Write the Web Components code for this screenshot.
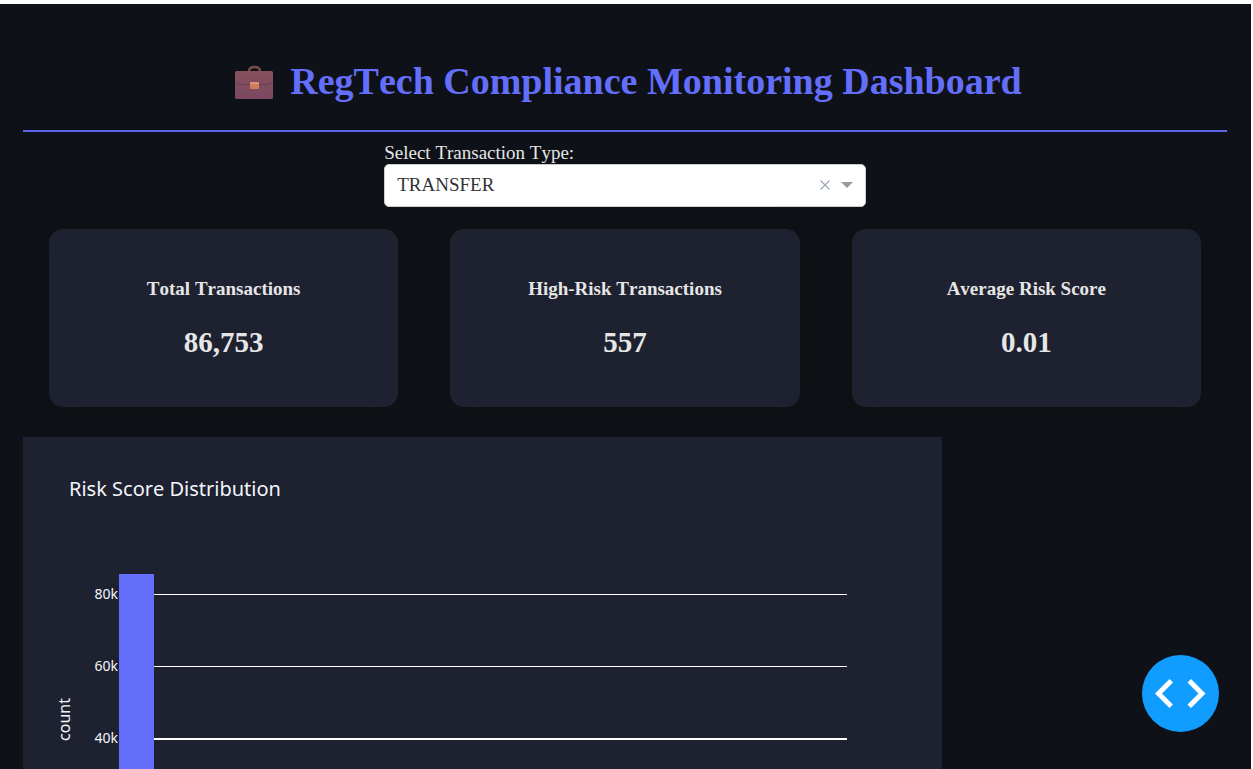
<!DOCTYPE html>
<html lang="en">
<head>
<meta charset="utf-8">
<meta name="viewport" content="width=device-width, initial-scale=1">
<title>RegTech Compliance Monitoring Dashboard</title>
<style>
  html { background: #fff; scrollbar-width: none; }
  body { margin: 0; padding: 4px 2px 0 0; font-family: "Liberation Serif", "Times New Roman", serif; font-size: 19px; font-kerning: none; color: #e6e6e6; }
</style>
</head>
<body>
<risk-dashboard></risk-dashboard>

<template id="risk-dashboard">
  <style>
    :host { display: block; background: #0e1117; padding: 53px 24px 24px 23px; }
    type-picker { width: 40%; margin: 10px auto 0; }
    .stats { display: grid; grid-template-columns: repeat(3, 1fr); gap: 52px; padding: 22px 26px 30px; }
    .charts { display: grid; grid-template-columns: 919fr 285fr; }
  </style>
  <dashboard-title>RegTech Compliance Monitoring Dashboard</dashboard-title>
  <main>
    <type-picker></type-picker>
    <div class="stats">
      <stat-card><span slot="label">Total Transactions</span><span slot="value">86,753</span></stat-card>
      <stat-card><span slot="label">High-Risk Transactions</span><span slot="value">557</span></stat-card>
      <stat-card><span slot="label">Average Risk Score</span><span slot="value">0.01</span></stat-card>
    </div>
    <div class="charts">
      <histogram-chart><span slot="title">Risk Score Distribution</span><span slot="axis">count</span></histogram-chart>
    </div>
  </main>
  <debug-button></debug-button>
</template>

<template id="dashboard-title">
  <style>
    :host { display: block; border-bottom: 2px solid #5f63e8; padding-bottom: 25px; }
    h1 { display: flex; justify-content: center; align-items: center; gap: 10px; margin: 0; font-size: 38px; line-height: 48px; font-weight: bold; color: #636efa; }
    svg { width: 52px; height: 36px; flex: none; }
  </style>
  <h1>
    <svg viewBox="0 0 52 36" aria-hidden="true">
      <defs><linearGradient id="leather" x1="0" y1="0" x2="0" y2="1"><stop offset="0" stop-color="#87525c"/><stop offset="1" stop-color="#7a4860"/></linearGradient></defs>
      <path d="M21 9.500V8.500Q21 4 26.500 4T32 8.500V9.500" fill="none" stroke="#7b4c49" stroke-width="2.500"/>
      <rect x="7" y="8" width="38" height="28" rx="1.500" fill="url(#leather)"/>
      <path d="M7.500 18Q9 21.500 12 21.500H40Q43 21.500 44.500 18" fill="none" stroke="#6d3b5b" stroke-width="1"/>
      <rect x="22" y="19" width="9" height="7" rx="1" fill="#d07c5e"/>
      <path d="M22 21V19.500H31V21Z" fill="#e29a74"/>
    </svg>
    <span><slot></slot></span>
  </h1>
</template>

<template id="type-picker">
  <style>
    :host { display: block; }
    label { display: block; line-height: 22px; }
    .box { display: flex; align-items: center; height: 43px; box-sizing: border-box; background: #fff; border: 1px solid #ccc; border-radius: 5px; padding: 0 12px 2px 0; }
    select { flex: 1; min-width: 0; height: 38px; appearance: none; border: 0; background: transparent; padding: 0 12px; font: inherit; font-kerning: none; color: #333; outline: 0; }
    button { border: 0; background: none; padding: 0; width: 12px; height: 20px; margin-right: 10px; display: grid; place-items: center; }
    svg { display: block; }
  </style>
  <label for="kind">Select Transaction Type:</label>
  <div class="box">
    <select id="kind"><option>TRANSFER</option></select>
    <button type="button" aria-label="Clear value"><svg width="12" height="12" viewBox="0 0 12 12"><path d="M1.500 1.500L10.500 10.500M10.500 1.500L1.500 10.500" stroke="#9aa6b8" stroke-width="1.100"/></svg></button>
    <svg width="12" height="6" viewBox="0 0 12 6" aria-hidden="true"><path d="M0 0H12L6 6Z" fill="#999"/></svg>
  </div>
</template>

<template id="stat-card">
  <style>
    :host { display: block; background: #1e2130; border-radius: 14px; box-shadow: 0 0 18px #111; padding: 48px 24px; text-align: center; }
    h2 { margin: 0 0 24px; font-size: 19px; line-height: 24px; }
    p { margin: 0; font-size: 29px; line-height: 34px; font-weight: bold; }
  </style>
  <h2><slot name="label"></slot></h2>
  <p><slot name="value"></slot></p>
</template>

<template id="histogram-chart">
  <style>
    :host { display: block; background: #1e2130; padding: 38px 95px 95px 31px; font-family: "Noto Sans", "Open Sans", sans-serif; color: #f2f5fa; }
    figure { margin: 0; }
    figcaption { font-size: 20px; line-height: 28px; padding: 0 15px 54px; }
    .plot { display: grid; grid-template-columns: 20px 44px 1fr; }
    .axis { writing-mode: vertical-rl; transform: rotate(180deg); justify-self: center; align-self: center; font-size: 16px; line-height: 20px; }
    .ticks { font-size: 14px; line-height: 20px; padding: 27px 0 0; text-align: right; }
    .ticks div { height: 72px; }
    .area { display: grid; margin-left: 1px; }
    .lines, .bar { grid-area: 1 / 1; }
    .lines { padding-top: 37px; }
    .lines div { height: 72px; box-sizing: border-box; border-top: 1px solid #fff; }
    .lines div:nth-child(n+3) { border-top-width: 2px; }
    .bar { width: 35px; margin-top: 17px; background: #636efa; }
  </style>
  <figure>
    <figcaption><slot name="title"></slot></figcaption>
    <div class="plot">
      <div class="axis"><slot name="axis"></slot></div>
      <div class="ticks"><div>80k</div><div>60k</div><div>40k</div></div>
      <div class="area">
        <div class="lines"><div></div><div></div><div></div><div></div></div>
        <div class="bar"></div>
      </div>
    </div>
  </figure>
</template>

<template id="debug-button">
  <style>
    :host { position: fixed; right: 34px; bottom: 37px; }
    button { display: block; width: 77px; height: 77px; border: 0; border-radius: 50%; padding: 0; background: #119dff; }
    svg { display: block; width: 77px; height: 77px; }
  </style>
  <button type="button" aria-label="Developer tools">
    <svg viewBox="0 0 77 77"><path fill="#fff" d="M13 38.500L27.500 24L31 27.500L20 38.500L31 49.500L27.500 53ZM63.500 38.500L49 24L45.500 27.500L56.500 38.500L45.500 49.500L49 53Z"/></svg>
  </button>
</template>

<script>
  class TemplateElement extends HTMLElement {
    constructor() {
      super();
      const template = document.getElementById(this.localName);
      this.attachShadow({ mode: "open" }).append(template.content.cloneNode(true));
    }
  }
  customElements.define("dashboard-title", class extends TemplateElement {});
  customElements.define("type-picker", class extends TemplateElement {});
  customElements.define("stat-card", class extends TemplateElement {});
  customElements.define("histogram-chart", class extends TemplateElement {});
  customElements.define("debug-button", class extends TemplateElement {});
  customElements.define("risk-dashboard", class extends TemplateElement {});
</script>
</body>
</html>
